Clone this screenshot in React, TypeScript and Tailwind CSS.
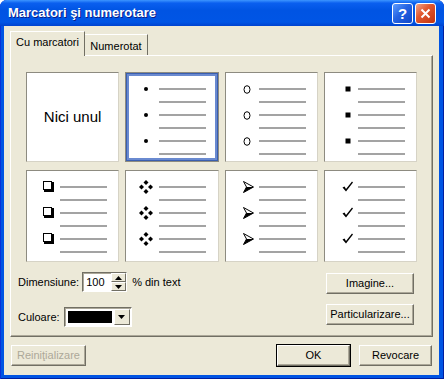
import React from 'react'

type Kind = 'dot' | 'circle' | 'square' | 'box' | 'diamonds' | 'arrow' | 'check'

const Bullet = ({ kind }: { kind: Kind }) => {
    if (kind === 'dot') {
        return (
            <svg width="14" height="14" viewBox="0 0 14 14" className="ml-[13px] shrink-0">
                <circle cx="7" cy="7" r="2" fill="#000" />
            </svg>
        )
    }
    if (kind === 'circle') {
        return (
            <svg width="14" height="14" viewBox="0 0 14 14" className="ml-[14px] shrink-0">
                <ellipse cx="7" cy="7.5" rx="3" ry="3.8" fill="none" stroke="#000" strokeWidth="1" />
            </svg>
        )
    }
    if (kind === 'square') {
        return (
            <svg width="14" height="14" viewBox="0 0 14 14" className="ml-[16px] shrink-0">
                <rect x="4.5" y="4.5" width="5" height="5" fill="#000" />
            </svg>
        )
    }
    if (kind === 'box') {
        return (
            <svg width="14" height="14" viewBox="0 0 14 14" className="ml-[15px] shrink-0">
                <rect x="1.5" y="1.5" width="8" height="8" fill="#fff" stroke="#000" strokeWidth="1" />
                <rect x="2" y="10" width="9" height="2" fill="#000" />
                <rect x="10" y="2" width="2" height="10" fill="#000" />
            </svg>
        )
    }
    if (kind === 'diamonds') {
        return (
            <svg width="14" height="14" viewBox="0 0 14 14" className="ml-[13px] shrink-0">
                <path d="M7 0 L9.5 2.5 L7 5 L4.5 2.5 Z" fill="#000" />
                <path d="M7 9 L9.5 11.5 L7 14 L4.5 11.5 Z" fill="#000" />
                <path d="M2.5 4.5 L5 7 L2.5 9.5 L0 7 Z" fill="#000" />
                <path d="M11.5 4.5 L14 7 L11.5 9.5 L9 7 Z" fill="#000" />
            </svg>
        )
    }
    if (kind === 'arrow') {
        return (
            <svg width="14" height="14" viewBox="0 0 14 14" className="ml-[16px] shrink-0">
                <path d="M1.5 1.5 L11.5 7 L1.5 12.5 L4.5 7 Z" fill="#fff" stroke="#000" strokeWidth="1" strokeLinejoin="miter" />
                <path d="M4.5 7 L11.5 7 L1.5 12.5 Z" fill="#000" />
            </svg>
        )
    }
    return (
        <svg width="14" height="14" viewBox="0 0 14 14" className="ml-[16px] shrink-0">
            <path d="M1.5 7.5 L3.5 6.5 L5 9 L11 1.5 L12 2.5 L5 11.5 Z" fill="#000" />
        </svg>
    )
}

const Line = () => <div className="h-[2px] w-[47px] bg-[#a3a3a3]" />

const BulletCell = ({ kind, selected }: { kind: Kind; selected?: boolean }) => {
    const rows = [0, 1, 2, 3, 4, 5]
    return (
        <div
            className={
                selected
                    ? 'bg-white border border-[#8d8b80] shadow-[inset_0_0_0_1px_#3a5fb0,inset_0_0_0_3px_#6a8ad0] pt-[9px]'
                    : 'bg-white border border-t-[#8d8b80] border-l-[#8d8b80] border-r-[#d6d3c6] border-b-[#d6d3c6] pt-[9px]'
            }
        >
            {rows.map((r) => (
                <div className="h-[13px] flex items-center" key={r}>
                    <div className="w-[33px] flex items-center">
                        {r % 2 === 0 && <Bullet kind={kind} />}
                    </div>
                    <Line />
                </div>
            ))}
        </div>
    )
}

const XpButton = ({ label, width, isDefault, disabled }: { label: string; width: string; isDefault?: boolean; disabled?: boolean }) => (
    <div className={isDefault ? 'border border-black' : 'border border-transparent'}>
        <div
            className={`${width} h-[21px] flex items-center justify-center bg-[#ece9d8] border border-t-white border-l-white border-r-[#716f64] border-b-[#716f64] shadow-[inset_-1px_-1px_#aca899] text-[11px] ${disabled ? 'text-[#aca899]' : 'text-black'}`}
        >
            {label}
        </div>
    </div>
)

const App = () => {
    const bullets: Kind[] = ['dot', 'circle', 'square', 'box', 'diamonds', 'arrow', 'check']

    return (
        <div className="w-[444px] h-[379px] flex flex-col bg-[#0054e3] rounded-t-[7px] overflow-hidden font-['Liberation_Sans',Arial,sans-serif] shadow-[inset_1px_0_#0831d9,inset_-1px_0_#001ea0,inset_0_-1px_#001ea0]">
            {/* title bar */}
            <div className="h-[26px] shrink-0 flex items-center pl-[8px] pr-[8px] bg-[linear-gradient(to_bottom,#3d95ff_0%,#0a5fef_12%,#0054e3_40%,#0055e5_85%,#0043cf_100%)]">
                <div className="flex-1 text-white font-bold text-[13px] [text-shadow:1px_1px_#0a1e8a]">
                    Marcatori şi numerotare
                </div>
                <div className="flex gap-[2px] mt-[1px]">
                    <div className="w-[21px] h-[21px] rounded-[3px] border border-white bg-[linear-gradient(135deg,#5d9cff_0%,#2463e2_45%,#1046c8_100%)] flex items-center justify-center text-white font-bold text-[15px] leading-none">
                        ?
                    </div>
                    <div className="w-[21px] h-[21px] rounded-[3px] border border-white bg-[linear-gradient(135deg,#f0a58c_0%,#e2582f_40%,#c1330e_100%)] flex items-center justify-center">
                        <svg width="11" height="11" viewBox="0 0 11 11">
                            <path d="M1.5 1.5 L9.5 9.5 M9.5 1.5 L1.5 9.5" stroke="#fff" strokeWidth="2" />
                        </svg>
                    </div>
                </div>
            </div>

            {/* body */}
            <div className="flex-1 ml-[4px] mr-[5px] mb-[4px] bg-[#ece9d8] pt-[5px] pl-[6px] pr-[6px] flex flex-col text-[11px] text-black">
                {/* tabs */}
                <div className="flex items-end h-[24px] relative z-10">
                    <div className="w-[75px] h-[25px] -mb-[1px] bg-[#ece9d8] border-t border-l border-white border-r border-r-[#716f64] flex items-center justify-center pb-[3px] text-[11px]">
                        Cu marcatori
                    </div>
                    <div className="w-[63px] h-[21px] bg-[#ece9d8] border-t border-white border-r border-r-[#716f64] flex items-center justify-center pt-[2px] text-[11px]">
                        Numerotat
                    </div>
                </div>

                {/* panel */}
                <div className="w-[423px] h-[282px] border border-t-white border-l-white border-r-[#716f64] border-b-[#716f64] shadow-[inset_-1px_-1px_#aca899] pt-[16px] flex flex-col">
                    <div className="pl-[15px]">
                        <div className="w-[391px] grid grid-cols-4 gap-x-[6px] gap-y-[8px] grid-rows-[90px_92px]">
                            <div className="bg-white border border-t-[#8d8b80] border-l-[#8d8b80] border-r-[#d6d3c6] border-b-[#d6d3c6] flex items-center justify-center text-[15px]">
                                Nici unul
                            </div>
                            {bullets.map((b, i) => (
                                <BulletCell kind={b} selected={i === 0} key={b} />
                            ))}
                        </div>
                    </div>

                    <div className="flex justify-between pl-[7px] pr-[17px] mt-[10px]">
                        <div className="flex flex-col gap-[15px]">
                            <div className="flex items-center h-[20px]">
                                <span>Dimensiune:</span>
                                <div className="ml-[3px] w-[45px] h-[20px] bg-white border border-t-[#716f64] border-l-[#716f64] border-r-white border-b-white shadow-[inset_1px_1px_#aca899] flex">
                                    <div className="flex-1 flex items-center pl-[3px]">100</div>
                                    <div className="w-[15px] flex flex-col">
                                        <div className="flex-1 bg-[#ece9d8] border border-t-white border-l-white border-r-[#716f64] border-b-[#716f64] flex items-center justify-center">
                                            <svg width="7" height="4" viewBox="0 0 7 4"><path d="M0 4 L3.5 0 L7 4 Z" fill="#000" /></svg>
                                        </div>
                                        <div className="flex-1 bg-[#ece9d8] border border-t-white border-l-white border-r-[#716f64] border-b-[#716f64] flex items-center justify-center">
                                            <svg width="7" height="4" viewBox="0 0 7 4"><path d="M0 0 L7 0 L3.5 4 Z" fill="#000" /></svg>
                                        </div>
                                    </div>
                                </div>
                                <span className="ml-[5px]">% din text</span>
                            </div>
                            <div className="flex items-center h-[20px]">
                                <span>Culoare:</span>
                                <div className="ml-[4px] w-[68px] h-[20px] bg-white border border-t-[#716f64] border-l-[#716f64] border-r-white border-b-white shadow-[inset_1px_1px_#aca899] flex items-center pl-[3px] pr-[1px] gap-[2px]">
                                    <div className="w-[44px] h-[12px] bg-black" />
                                    <div className="w-[16px] h-[16px] bg-[#ece9d8] border border-t-white border-l-white border-r-[#716f64] border-b-[#716f64] flex items-center justify-center">
                                        <svg width="7" height="4" viewBox="0 0 7 4"><path d="M0 0 L7 0 L3.5 4 Z" fill="#000" /></svg>
                                    </div>
                                </div>
                            </div>
                        </div>
                        <div className="flex flex-col gap-[8px]">
                            <XpButton label="Imagine..." width="w-[88px]" />
                            <XpButton label="Particularizare..." width="w-[88px]" />
                        </div>
                    </div>
                </div>

                {/* bottom buttons */}
                <div className="flex items-center mt-[7px]">
                    <XpButton label="Reiniţializare" width="w-[75px]" disabled />
                    <div className="flex-1" />
                    <div className="flex gap-[7px]">
                        <XpButton label="OK" width="w-[73px]" isDefault />
                        <XpButton label="Revocare" width="w-[73px]" />
                    </div>
                </div>
            </div>
        </div>
    )
}

export default App
